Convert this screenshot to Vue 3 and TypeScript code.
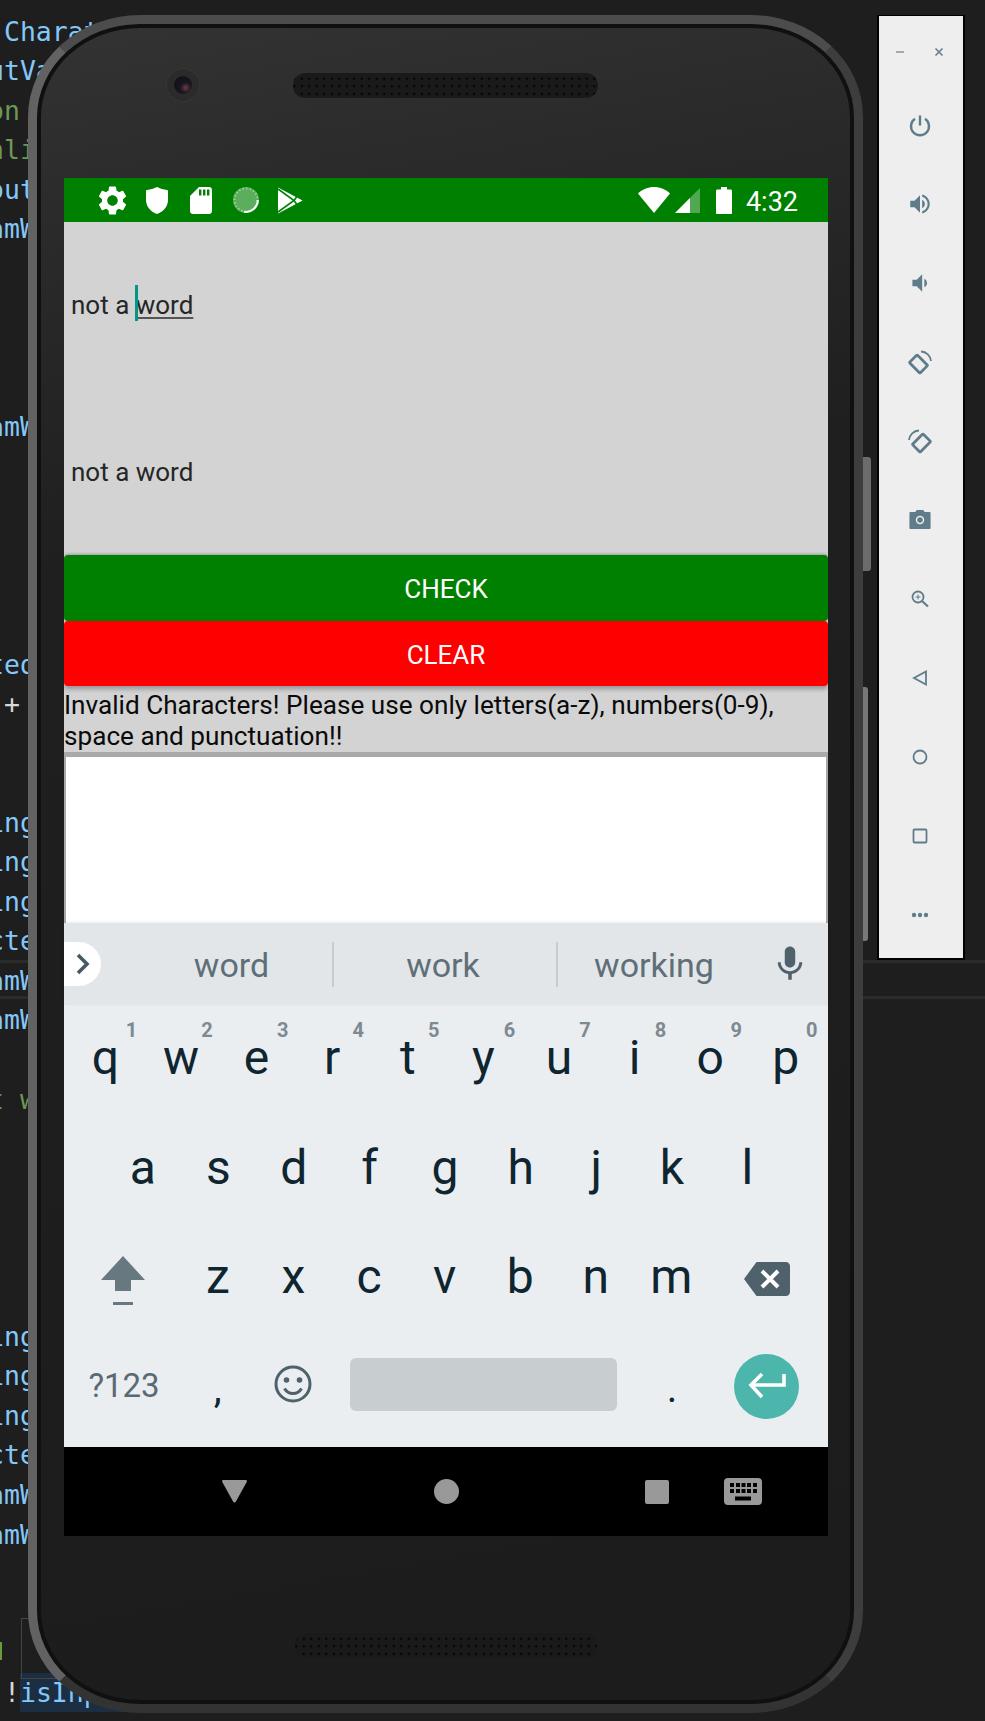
<script setup lang="ts">
interface CodeLine { text: string; kind: string; mark?: string }
const sparse: Record<number, CodeLine> = {
  0: { text: '              (long outcome));', kind: 'blue' },
  1: { text: ' CharaterLimit', kind: 'blue' },
  2: { text: 'utValue', kind: 'blue' },
  3: { text: 'on', kind: 'green' },
  4: { text: 'nli', kind: 'green' },
  5: { text: 'out', kind: 'blue' },
  6: { text: 'amWord', kind: 'blue' },
  11: { text: 'amWord', kind: 'blue' },
  17: { text: 'ted', kind: 'blue' },
  18: { text: ' +', kind: 'white' },
  21: { text: 'ing', kind: 'blue' },
  22: { text: 'ing', kind: 'blue' },
  23: { text: 'ing', kind: 'blue' },
  24: { text: 'cte', kind: 'blue' },
  25: { text: 'amWord', kind: 'blue' },
  26: { text: 'amWord', kind: 'blue' },
  28: { text: 't word', kind: 'green' },
  31: { text: '-', kind: 'white' },
  34: { text: 'ing', kind: 'blue' },
  35: { text: 'ing', kind: 'blue' },
  36: { text: 'ing', kind: 'blue' },
  37: { text: 'cte', kind: 'blue' },
  38: { text: 'amWord', kind: 'blue' },
  39: { text: 'amWord', kind: 'blue' },
  43: { text: ' !', kind: 'white', mark: 'isInput' }
}
const codeLines: CodeLine[] = Array.from({ length: 44 }, (_, i) => sparse[i] ?? { text: ' ', kind: 'blue' })

const rowOne = [
  { k: 'q', h: '1' }, { k: 'w', h: '2' }, { k: 'e', h: '3' }, { k: 'r', h: '4' }, { k: 't', h: '5' },
  { k: 'y', h: '6' }, { k: 'u', h: '7' }, { k: 'i', h: '8' }, { k: 'o', h: '9' }, { k: 'p', h: '0' }
]
const rowTwo = ['a', 's', 'd', 'f', 'g', 'h', 'j', 'k', 'l']
const rowThree = ['z', 'x', 'c', 'v', 'b', 'n', 'm']
</script>

<template>
  <div class="desk">
    <div class="editor" aria-hidden="true">
      <div v-for="(line, i) in codeLines" :key="i" class="code" :class="line.kind">{{ line.text }}<span v-if="line.mark" class="mark">{{ line.mark }}</span></div>
      <div class="rule rule-a"></div>
      <div class="rule rule-b"></div>
      <div class="peek-box"></div>
      <div class="peek-bar"></div>
    </div>

    <div class="phone">
      <div class="hw hw-power"></div>
      <div class="hw hw-volume"></div>

      <div class="bezel-top">
        <div class="camera"><div class="lens"></div></div>
        <div class="speaker"></div>
      </div>

      <div class="screen">
        <div class="status">
          <div class="status-left">
            <span class="s-icon">
              <svg width="35" height="35" viewBox="0 0 24 24"><path fill="#fff" d="M19.14 12.94c.04-.3.06-.61.06-.94 0-.32-.02-.64-.07-.94l2.03-1.58c.18-.14.23-.41.12-.61l-1.92-3.32c-.12-.22-.37-.29-.59-.22l-2.39.96c-.5-.38-1.03-.7-1.62-.94l-.36-2.54c-.04-.24-.24-.41-.48-.41h-3.84c-.24 0-.43.17-.47.41l-.36 2.54c-.59.24-1.13.57-1.62.94l-2.39-.96c-.22-.08-.47 0-.59.22L2.74 8.87c-.12.21-.08.47.12.61l2.03 1.58c-.05.3-.09.63-.09.94s.02.64.07.94l-2.03 1.58c-.18.14-.23.41-.12.61l1.92 3.32c.12.22.37.29.59.22l2.39-.96c.5.38 1.03.7 1.62.94l.36 2.54c.05.24.24.41.48.41h3.84c.24 0 .44-.17.47-.41l.36-2.54c.59-.24 1.13-.56 1.62-.94l2.39.96c.22.08.47 0 .59-.22l1.92-3.32c.12-.22.07-.47-.12-.61l-2.01-1.58zM12 15.6c-1.98 0-3.6-1.62-3.6-3.6s1.62-3.6 3.6-3.6 3.6 1.62 3.6 3.6-1.62 3.6-3.6 3.6z"/></svg>
            </span>
            <span class="s-icon">
              <svg width="22" height="27" viewBox="0 0 22 27"><path fill="#fff" d="M11 0c3 1.6 6.6 2.6 10 3 .7.1 1 .5 1 1.100V13c0 6.500-4.500 11.500-11 14C4.500 24.500 0 19.500 0 13V4.100C0 3.500.3 3.100 1 3c3.400-.4 7-1.400 10-3z"/></svg>
            </span>
            <span class="s-icon">
              <svg width="22" height="27" viewBox="0 0 22 27"><path fill="#fff" d="M9 0h10c1.700 0 3 1.300 3 3v21c0 1.700-1.300 3-3 3H3c-1.700 0-3-1.300-3-3V9z"/><path fill="#008000" d="M9 2.500h2.400v6H9zM13 2.500h2.400v6H13zM17 2.500h2.400v6H17z"/></svg>
            </span>
            <span class="s-icon">
              <svg width="28" height="28" viewBox="0 0 28 28"><circle cx="14" cy="14" r="13" fill="#5bae5b"/><circle cx="14" cy="14" r="11.500" fill="none" stroke="#a5d5a5" stroke-width="2" stroke-dasharray="1.200 2.400"/><path d="M25.800 14A11.800 11.800 0 0 1 12 25.700" fill="none" stroke="#fff" stroke-width="2"/></svg>
            </span>
            <span class="s-icon">
              <svg width="25" height="27" viewBox="0 0 25 27"><path fill="#fff" d="M0 0.500 L24.500 13.500 L0 26.500Z"/><path fill="none" stroke="#008000" stroke-width="1.600" d="M0 2 L16 13.500 L0 25M16 13.500 L20 8M16 13.500 L20 19"/></svg>
            </span>
          </div>
          <div class="status-right">
            <svg width="32" height="26" viewBox="0 0 32 26"><path fill="#fff" d="M0 6.500C4 2.500 10 0 16 0s12 2.500 16 6.500L16 26z"/></svg>
            <svg class="sig" width="25" height="25" viewBox="0 0 25 25"><path fill="#52a852" d="M25 0v25H0z"/><path fill="#fff" d="M15 10v15H0z"/></svg>
            <svg class="bat" width="16" height="27" viewBox="0 0 16 27"><path fill="#fff" d="M5 0h6v2.500h3.500c.9 0 1.500.6 1.500 1.500v22c0 .6-.4 1-1 1H1c-.6 0-1-.4-1-1V4c0-.9.6-1.500 1.500-1.500H5z"/></svg>
            <span class="clock">4:32</span>
          </div>
        </div>

        <div class="content">
          <div class="field">
            <span>not a <span class="composing"><i class="caret"></i>word</span></span>
          </div>
          <div class="field"><span>not a word</span></div>
          <button class="btn btn-check">CHECK</button>
          <button class="btn btn-clear">CLEAR</button>
          <p class="message">Invalid Characters! Please use only letters(a-z), numbers(0-9), space and punctuation!!</p>
          <div class="webbox"></div>
        </div>

        <div class="keyboard">
          <div class="strip">
            <div class="pill">
              <svg width="16" height="24" viewBox="0 0 16 24"><path d="M3 3l9 9-9 9" fill="none" stroke="#455a64" stroke-width="3.600"/></svg>
            </div>
            <div class="sugg sugg-a">word</div>
            <div class="sugg sugg-b">work</div>
            <div class="sugg sugg-c">working</div>
            <div class="mic">
              <svg width="42" height="42" viewBox="0 0 24 24"><path fill="#4f626c" d="M12 14c1.660 0 2.990-1.340 2.990-3L15 5c0-1.660-1.340-3-3-3S9 3.340 9 5v6c0 1.660 1.340 3 3 3zm5.300-3c0 3-2.540 5.100-5.300 5.100S6.700 14 6.700 11H5c0 3.410 2.720 6.230 6 6.720V21h2v-3.280c3.280-.48 6-3.300 6-6.720h-1.700z"/></svg>
            </div>
          </div>

          <div class="row row-first">
            <div v-for="item in rowOne" :key="item.k" class="key"><span class="hint">{{ item.h }}</span>{{ item.k }}</div>
          </div>
          <div class="row row-inset">
            <div v-for="k in rowTwo" :key="k" class="key">{{ k }}</div>
          </div>
          <div class="row row-third">
            <div class="key-wide key-shift">
              <svg width="44" height="50" viewBox="0 0 44 50"><path fill="#687880" d="M22 0l22 24H30v11H14V24H0z"/><path fill="#687880" d="M12 46h20v3H12z"/></svg>
            </div>
            <div v-for="k in rowThree" :key="k" class="key">{{ k }}</div>
            <div class="key-back">
              <svg width="46" height="34" viewBox="0 0 46 34"><path fill="#4f626c" d="M12.500 0H42c2.200 0 4 1.800 4 4v26c0 2.200-1.800 4-4 4H12.500L0 17z"/><path stroke="#fff" stroke-width="4" d="M18 9l16 16M34 9L18 25"/></svg>
            </div>
          </div>
          <div class="row">
            <div class="key-wide sym">?123</div>
            <div class="key punct">,</div>
            <div class="key key-emoji">
              <svg width="38" height="38" viewBox="0 0 38 38"><circle cx="19" cy="19" r="17" fill="none" stroke="#4f626c" stroke-width="3"/><circle cx="12.500" cy="15" r="2.800" fill="#4f626c"/><circle cx="25.500" cy="15" r="2.800" fill="#4f626c"/><path d="M10.500 23.500c2 3.500 5 5 8.500 5s6.500-1.500 8.500-5" fill="none" stroke="#4f626c" stroke-width="3"/></svg>
            </div>
            <div class="space-slot"><div class="spacebar"></div></div>
            <div class="key punct">.</div>
            <div class="enter-slot">
              <div class="enter">
                <svg width="38" height="28" viewBox="0 0 38 28"><path d="M36 2v11H4" fill="none" stroke="#fff" stroke-width="3.600"/><path d="M14 2L3 13l11 12" fill="none" stroke="#fff" stroke-width="3.600"/></svg>
              </div>
            </div>
          </div>
        </div>

        <div class="nav">
          <svg class="n-back" width="25" height="23" viewBox="0 0 25 23"><path fill="#999" d="M1.500 0h22c1.200 0 1.800 1 1.200 2L13.800 21.800c-.6 1-2 1-2.600 0L.3 2C-.3 1 .3 0 1.500 0z"/></svg>
          <span class="n-home"></span>
          <span class="n-recent"></span>
          <svg class="n-kb" width="38" height="27" viewBox="0 0 38 27"><rect width="38" height="27" rx="4" fill="#999"/><g fill="#000"><rect x="6" y="5" width="4" height="4"/><rect x="12" y="5" width="4" height="4"/><rect x="17.500" y="5" width="4" height="4"/><rect x="23" y="5" width="4" height="4"/><rect x="29" y="5" width="4" height="4"/><rect x="6" y="11" width="4" height="4"/><rect x="12" y="11" width="4" height="4"/><rect x="17.500" y="11" width="4" height="4"/><rect x="23" y="11" width="4" height="4"/><rect x="29" y="11" width="4" height="4"/><rect x="11" y="18.500" width="16" height="4"/></g></svg>
        </div>
      </div>

      <div class="bezel-bottom"><div class="speaker speaker-low"></div></div>
    </div>

    <aside class="panel">
      <div class="win">
        <svg width="10" height="10" viewBox="0 0 10 10"><path d="M1 5h8" stroke="#8a9aa2" stroke-width="1.600"/></svg>
        <svg width="10" height="10" viewBox="0 0 10 10"><path d="M1.500 1.500l7 7M8.500 1.500l-7 7" stroke="#5f7c8a" stroke-width="1.500"/></svg>
      </div>
      <div class="tool">
        <svg width="24" height="24" viewBox="0 0 24 24" fill="none" stroke="#5f7c8a" stroke-width="2.400"><path d="M12 2.500v10"/><path d="M7 5.800a9 9 0 1 0 10 0"/></svg>
      </div>
      <div class="tool">
        <svg width="26" height="26" viewBox="0 0 24 24" fill="#5f7c8a"><path d="M3 9v6h4l5 5V4L7 9H3zm13.500 3c0-1.770-1.020-3.290-2.500-4.030v8.050c1.480-.73 2.500-2.250 2.500-4.020zM14 3.230v2.060c2.890.86 5 3.540 5 6.710s-2.110 5.850-5 6.710v2.060c4.010-.91 7-4.490 7-8.770s-2.990-7.860-7-8.770z"/></svg>
      </div>
      <div class="tool">
        <svg width="26" height="26" viewBox="0 0 24 24" fill="#5f7c8a"><path d="M18.500 12c0-1.770-1.020-3.290-2.500-4.030v8.050c1.480-.73 2.500-2.250 2.500-4.020zM5 9v6h4l5 5V4L9 9H5z"/></svg>
      </div>
      <div class="tool">
        <svg width="26" height="26" viewBox="0 0 26 26" fill="none" stroke="#5f7c8a"><rect x="6" y="7.500" width="11" height="15" rx="1" stroke-width="2.800" transform="rotate(-45 11.500 15)"/><path d="M14 2.500a10.500 10.500 0 0 1 10 9.500" stroke-width="1.800"/></svg>
      </div>
      <div class="tool">
        <svg width="26" height="26" viewBox="0 0 26 26" fill="none" stroke="#5f7c8a"><rect x="9" y="7.500" width="11" height="15" rx="1" stroke-width="2.800" transform="rotate(45 14.500 15)"/><path d="M12 2.500A10.500 10.500 0 0 0 2 12" stroke-width="1.800"/></svg>
      </div>
      <div class="tool">
        <svg width="22" height="19" viewBox="0 0 20 18"><path fill="#5f7c8a" d="M1 2h4.500L7 0h6l1.500 2H19c.6 0 1 .4 1 1v14c0 .6-.4 1-1 1H1c-.6 0-1-.4-1-1V3c0-.6.4-1 1-1z"/><circle cx="10" cy="9.500" r="4" fill="#eee"/><circle cx="10" cy="9.500" r="2.600" fill="#5f7c8a"/></svg>
      </div>
      <div class="tool">
        <svg width="18" height="18" viewBox="0 0 18 18" fill="none" stroke="#5f7c8a"><circle cx="7" cy="7" r="5.500" stroke-width="1.800"/><path d="M7 4.500v5M4.500 7h5" stroke-width="1"/><path d="M11 11l6 5.500" stroke-width="2.200"/></svg>
      </div>
      <div class="tool">
        <svg width="16" height="16" viewBox="0 0 16 16" fill="none" stroke="#5f7c8a" stroke-width="1.800"><path d="M14 1.500v13L2 8z"/></svg>
      </div>
      <div class="tool">
        <svg width="16" height="16" viewBox="0 0 16 16" fill="none" stroke="#5f7c8a" stroke-width="1.800"><circle cx="8" cy="8" r="6.500"/></svg>
      </div>
      <div class="tool">
        <svg width="16" height="16" viewBox="0 0 16 16" fill="none" stroke="#5f7c8a" stroke-width="1.800"><rect x="1.500" y="1.500" width="13" height="13" rx="1"/></svg>
      </div>
      <div class="tool">
        <svg width="18" height="6" viewBox="0 0 18 6" fill="#5f7c8a"><circle cx="3" cy="3" r="2.200"/><circle cx="9" cy="3" r="2.200"/><circle cx="15" cy="3" r="2.200"/></svg>
      </div>
    </aside>
  </div>
</template>

<style scoped>
.desk {
  position: relative;
  width: 985px;
  height: 1721px;
  box-sizing: border-box;
  padding: 15px 0 0 28px;
  display: flex;
  align-items: flex-start;
  gap: 14px;
  overflow: hidden;
  background: #1e1e1e;
}
.editor {
  position: absolute;
  top: -27.8px;
  left: -12px;
  right: 0;
  bottom: 0;
  font-family: "DejaVu Sans Mono", "Liberation Mono", monospace;
  font-size: 26.5px;
  line-height: 39.55px;
  white-space: pre;
}
.code { height: 39.55px; }
.code:first-child {
  margin-top: -7px;
  margin-bottom: 7px;
}
.blue { color: #84c8fa; }
.green { color: #6a9955; }
.white { color: #d8d8d8; }
.mark {
  display: inline-block;
  color: #84c8fa;
  background: #1c2e42;
}
.rule {
  position: absolute;
  left: 0;
  right: 0;
  height: 3px;
  background: #2b2b2b;
}
.rule-a { top: 988px; }
.rule-b { top: 1024px; }
.peek-box {
  position: absolute;
  left: 33px;
  top: 1646px;
  width: 60px;
  height: 59px;
  border: 1px solid #444;
}
.peek-bar {
  position: absolute;
  left: 12px;
  top: 1670px;
  width: 2px;
  height: 18px;
  background: #6a9a3a;
}

.phone {
  position: relative;
  flex: none;
  width: 835px;
  height: 1698px;
  box-sizing: border-box;
  border: 9px solid;
  border-color: #4c4c4c #3d3d3d #333333 #626262;
  border-radius: 112px / 102px;
  background: linear-gradient(170deg, #333333 0, #2a2a2a 12%, #1f1f1f 30%, #1c1c1c 100%);
  box-shadow: inset 0 0 0 4px #101010;
}
.hw {
  position: absolute;
  background: #6c6c6c;
  border-radius: 0 3px 3px 0;
}
.hw-power { left: 826px; top: 433px; width: 8px; height: 114px; }
.hw-volume { left: 826px; top: 663px; width: 5px; height: 254px; background: #787878; }

.bezel-top {
  height: 154px;
  box-sizing: border-box;
  padding: 49px 0 0 130px;
  display: flex;
  align-items: flex-start;
  gap: 94px;
}
.camera {
  width: 32px;
  height: 32px;
  margin-top: -4px;
  border-radius: 50%;
  background: #2b2b2b;
  box-shadow: 0 0 0 1px #363636;
  display: flex;
  align-items: center;
  justify-content: center;
}
.lens {
  width: 18px;
  height: 18px;
  border-radius: 50%;
  background: radial-gradient(circle at 65% 65%, #6b3d42 0, #1a1620 32%, #0d0d12 100%);
}
.speaker {
  width: 305px;
  height: 25px;
  box-sizing: border-box;
  border-radius: 12px;
  background-color: #1a1a1a;
  background-image: radial-gradient(circle, #050505 1px, transparent 1.6px);
  background-size: 7.5px 7.5px;
  background-position: 5px 2px;
}
.speaker-low { width: 302px; }
.bezel-bottom {
  padding: 97px 0 0 258px;
}

.screen {
  width: 764px;
  height: 1358px;
  margin-left: 27px;
  display: flex;
  flex-direction: column;
  font-family: Roboto, "Liberation Sans", sans-serif;
}
.status {
  flex: none;
  height: 44px;
  box-sizing: border-box;
  padding: 0 30px 0 26px;
  background: #008000;
  display: flex;
  align-items: center;
  justify-content: space-between;
}
.status-left {
  display: flex;
  align-items: center;
  gap: 0.5px;
}
.s-icon {
  width: 44px;
  display: flex;
  align-items: center;
  justify-content: center;
}
.status-right {
  display: flex;
  align-items: center;
}
.sig { margin-left: 5px; }
.bat { margin-left: 16px; }
.clock {
  margin-left: 14px;
  padding-top: 3px;
  color: #fff;
  font-size: 27px;
  line-height: 30px;
}

.content {
  flex: none;
  height: 701px;
  overflow: hidden;
  background: #d3d3d3;
  display: flex;
  flex-direction: column;
}
.field {
  flex: none;
  height: 166.5px;
  padding-left: 7px;
  display: flex;
  align-items: center;
  color: #262626;
  font-size: 26px;
  line-height: 36px;
}
.composing {
  position: relative;
  display: inline-block;
  text-decoration: underline;
  text-decoration-color: #555;
  text-decoration-thickness: 2px;
  text-underline-offset: 3px;
}
.caret {
  position: absolute;
  left: -1px;
  top: -2px;
  width: 3px;
  height: 36px;
  background: #009688;
}
.btn {
  flex: none;
  display: block;
  width: 100%;
  height: 65.5px;
  padding: 3px 0 0;
  border: 0;
  border-radius: 4px;
  color: #fff;
  font-family: Roboto, "Liberation Sans", sans-serif;
  font-size: 26px;
}
.btn-check {
  background: #008000;
  box-shadow: 0 -1px 3px rgba(0, 0, 0, 0.25);
}
.btn-clear {
  position: relative;
  background: #ff0000;
  box-shadow: 0 3px 5px rgba(0, 0, 0, 0.3);
}
.message {
  flex: none;
  height: 66px;
  margin: 0;
  box-sizing: border-box;
  padding-top: 4px;
  color: #0a0a0a;
  font-size: 26.15px;
  line-height: 31px;
}
.webbox {
  flex: 1;
  box-sizing: border-box;
  background: #fff;
  border: solid #a9a9a9;
  border-width: 5px 2px 0;
}

.keyboard {
  flex: none;
  height: 524px;
  background: #ebeef1;
  display: flex;
  flex-direction: column;
}
.strip {
  flex: none;
  height: 82px;
  background: #e3e6e9;
  display: flex;
  align-items: center;
  color: #5f6f78;
  font-size: 34px;
  box-shadow: 0 -1px 3px rgba(0, 0, 0, 0.08);
}
.pill {
  flex: none;
  width: 37px;
  height: 44px;
  box-sizing: border-box;
  padding-left: 11px;
  background: #fff;
  border-radius: 0 22px 22px 0;
  display: flex;
  align-items: center;
}
.sugg {
  flex: none;
  height: 45px;
  line-height: 47px;
  text-align: center;
  box-sizing: border-box;
}
.sugg-a { width: 201px; margin-left: 30px; }
.sugg-b { width: 224px; border-left: 2px solid #c8ccd0; padding-right: 4px; }
.sugg-c { width: 198px; border-left: 2px solid #c8ccd0; padding-right: 4px; }
.mic {
  flex: 1;
  display: flex;
  justify-content: center;
  padding-right: 2px;
}
.row {
  flex: none;
  height: 110.500px;
  display: flex;
  color: #0f2530;
  font-size: 48px;
}
.row-first { padding-left: 3.600px; }
.row-inset { padding-left: 40.900px; }
.key {
  position: relative;
  flex: none;
  width: 75.600px;
  box-sizing: border-box;
  padding-bottom: 6px;
  display: flex;
  align-items: center;
  justify-content: center;
}
.row-third .key { padding-bottom: 10px; }
.hint {
  position: absolute;
  top: 13px;
  right: 6px;
  color: #7d8a91;
  font-size: 20px;
  font-weight: 700;
  line-height: 24px;
}
.key-wide {
  flex: none;
  width: 116px;
  box-sizing: border-box;
  display: flex;
  align-items: center;
  justify-content: center;
}
.key-shift { padding-left: 2px; }
.key-back {
  flex: none;
  width: 119px;
  box-sizing: border-box;
  padding: 0 4px 4px 0;
  display: flex;
  align-items: center;
  justify-content: center;
}
.sym {
  padding: 0 0 12px 4px;
  color: #5a6a72;
  font-size: 33px;
}
.punct { font-size: 40px; }
.key-emoji { padding-bottom: 15px; }
.space-slot {
  flex: none;
  width: 303px;
  box-sizing: border-box;
  padding: 21px 17px 0 19px;
}
.spacebar {
  height: 53px;
  border-radius: 6px;
  background: #c8cdd0;
}
.enter-slot {
  flex: 1;
  box-sizing: border-box;
  display: flex;
  align-items: center;
  justify-content: center;
  padding: 0 4px 11px 0;
}
.enter {
  width: 65px;
  height: 65px;
  border-radius: 50%;
  background: #4db6ac;
  display: flex;
  align-items: center;
  justify-content: center;
}

.nav {
  flex: none;
  height: 89px;
  box-sizing: border-box;
  padding-left: 157.500px;
  background: #000;
  display: flex;
  align-items: center;
}
.n-home {
  width: 25px;
  height: 25px;
  margin-left: 187px;
  border-radius: 50%;
  background: #999;
}
.n-recent {
  width: 24px;
  height: 24px;
  margin-left: 186.500px;
  border-radius: 2px;
  background: #999;
}
.n-kb { margin-left: 55px; }

.panel {
  flex: none;
  width: 88px;
  height: 945px;
  box-sizing: border-box;
  padding: 69px 2px 0 0;
  background: #eeeeee;
  border: 2px solid #000;
  border-top-width: 1px;
}
.win {
  position: absolute;
  top: 47px;
  left: 895px;
  width: 49px;
  display: flex;
  justify-content: space-between;
}
.tool {
  height: 79px;
  display: flex;
  align-items: center;
  justify-content: center;
}
</style>
